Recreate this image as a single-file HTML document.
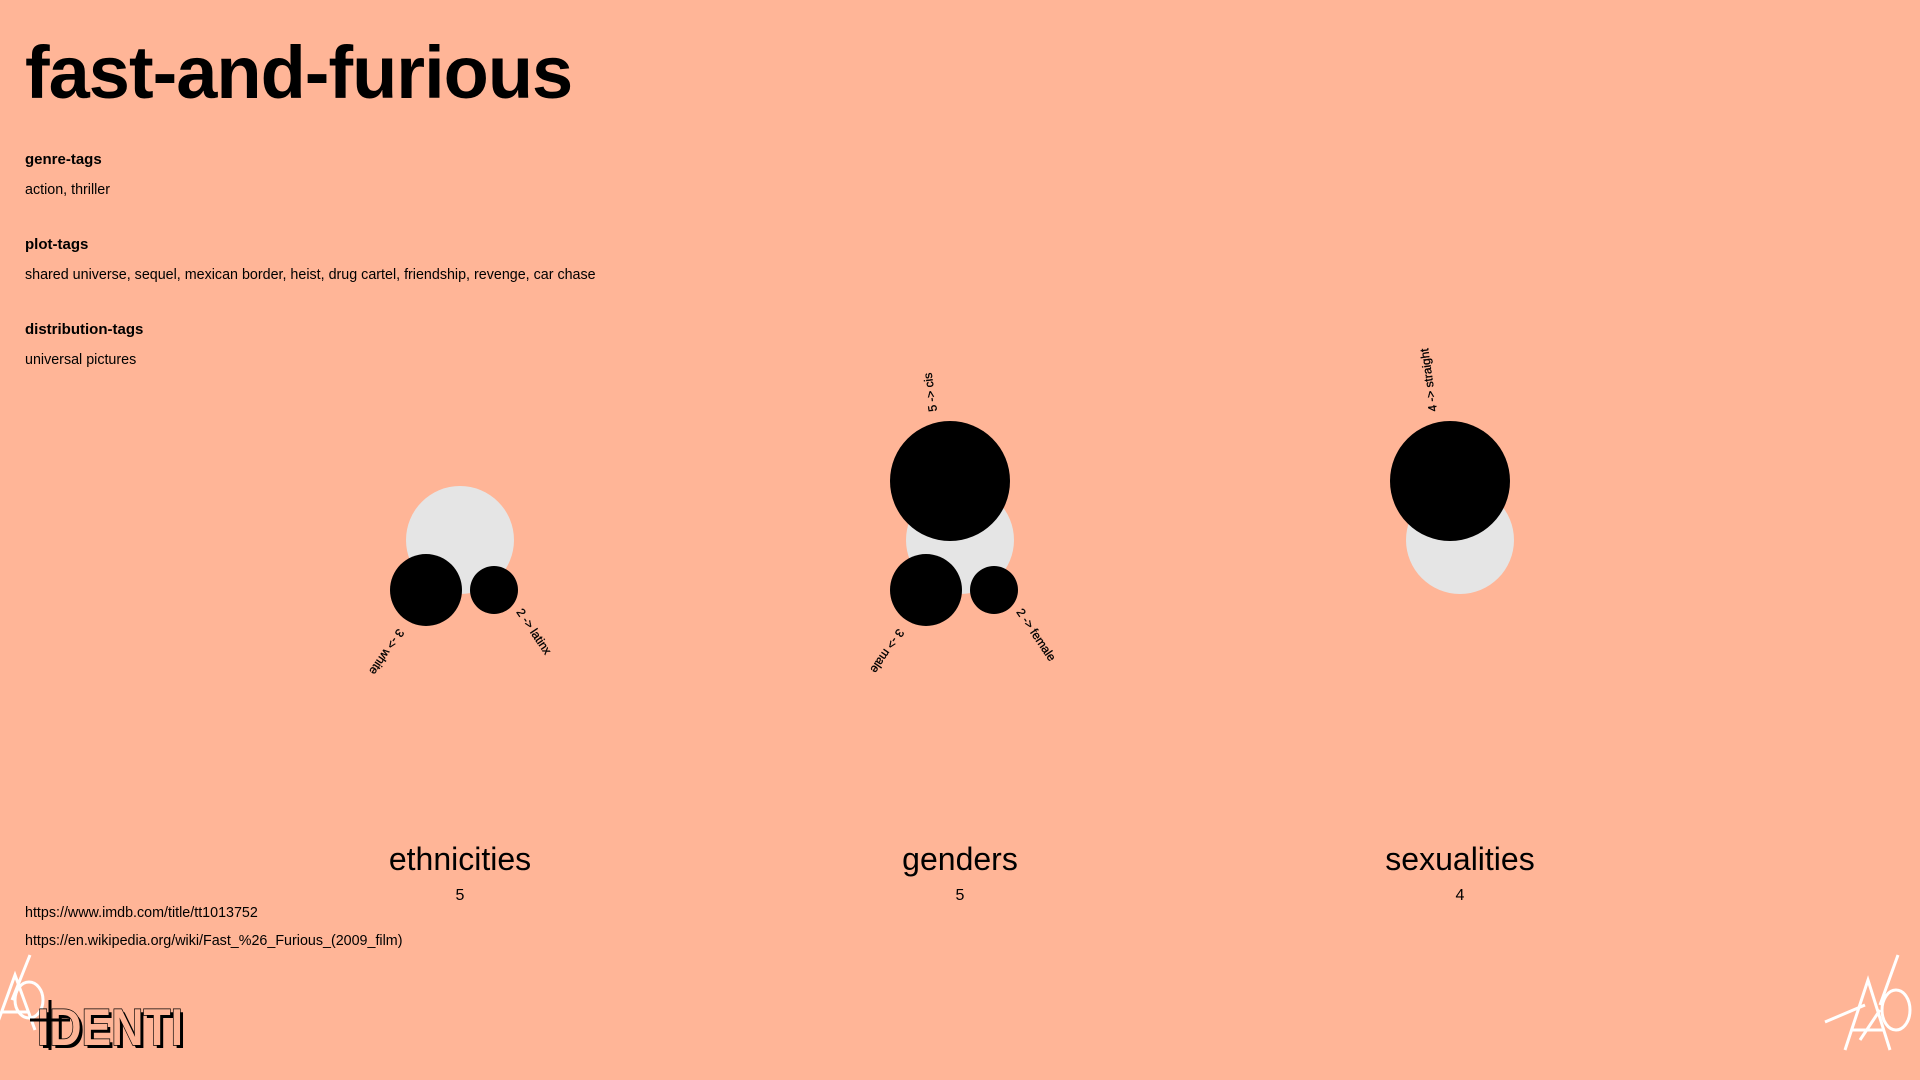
<!DOCTYPE html>
<html><head><meta charset="utf-8"><style>
html,body{margin:0;padding:0;}
body{width:1920px;height:1080px;background:#FFB597;position:relative;overflow:hidden;font-family:"Liberation Sans",sans-serif;color:#000;}
.t{position:absolute;left:25px;top:36px;font-size:74px;font-weight:bold;letter-spacing:-1px;line-height:1;}
.h{position:absolute;left:25px;font-size:15px;font-weight:bold;}
.b{position:absolute;left:25px;font-size:14.3px;}
svg{position:absolute;left:0;top:0;}
</style></head><body>
<div class="t">fast-and-furious</div>
<div class="h" style="top:151px">genre-tags</div>
<div class="b" style="top:182px">action, thriller</div>
<div class="h" style="top:236px">plot-tags</div>
<div class="b" style="top:267px">shared universe, sequel, mexican border, heist, drug cartel, friendship, revenge, car chase</div>
<div class="h" style="top:321px">distribution-tags</div>
<div class="b" style="top:352px">universal pictures</div>
<div class="b" style="top:905px">https://www.imdb.com/title/tt1013752</div>
<div class="b" style="top:933px">https://en.wikipedia.org/wiki/Fast_%26_Furious_(2009_film)</div>
<svg width="1920" height="1080" viewBox="0 0 1920 1080">
<g fill="#e5e5e5">
<circle cx="460" cy="540" r="54"/><circle cx="960" cy="540" r="54"/><circle cx="1460" cy="540" r="54"/>
</g>
<g fill="#000">
<circle cx="426" cy="590" r="36"/><circle cx="494" cy="590" r="24"/>
<circle cx="950" cy="481" r="60"/><circle cx="926" cy="590" r="36"/><circle cx="994" cy="590" r="24"/>
<circle cx="1450" cy="481" r="60"/>
</g>
<g font-family="Liberation Sans, sans-serif" font-size="12" fill="#000" stroke="#000" stroke-width="0.3">
<text transform="translate(398,628) rotate(124)">3 -&gt; white</text>
<text transform="translate(516,612) rotate(56)">2 -&gt; latinx</text>
<text transform="translate(898,628) rotate(124)">3 -&gt; male</text>
<text transform="translate(1016,612) rotate(56)">2 -&gt; female</text>
<text transform="translate(937,411) rotate(-98)">5 -&gt; cis</text>
<text transform="translate(1437,411) rotate(-98)">4 -&gt; straight</text>
</g>
<g font-family="Liberation Sans, sans-serif" text-anchor="middle" fill="#000">
<text x="460" y="870" font-size="32">ethnicities</text>
<text x="960" y="870" font-size="32">genders</text>
<text x="1460" y="870" font-size="32">sexualities</text>
<text x="460" y="900" font-size="16">5</text>
<text x="960" y="900" font-size="16">5</text>
<text x="1460" y="900" font-size="16">4</text>
</g>
<g fill="none" stroke="#fff" stroke-width="3">
<path d="M-5 1030 L15 975 L35 1030 M2 1012 L28 1012"/>
<path d="M30 955 L12 1000 M15 1000 a14 18 0 1 0 28 0 a14 18 0 1 0 -28 0"/>
<path d="M1845 1050 L1868 980 L1890 1050 M1852 1030 L1884 1030 M1825 1022 L1865 1005 M1860 1040 L1880 1010"/>
<path d="M1898 955 L1880 1005 M1882 1010 a14 20 0 1 0 28 0 a14 20 0 1 0 -28 0"/>
</g>
<g font-family="Liberation Sans, sans-serif" font-size="52" font-weight="bold">
<text x="40" y="1048" fill="#000" textLength="146" lengthAdjust="spacingAndGlyphs">IDENTI</text>
<text x="37" y="1045" fill="none" stroke="#000" stroke-width="1.5" textLength="146" lengthAdjust="spacingAndGlyphs">IDENTI</text>
<text x="37" y="1045" fill="#FFB597" stroke="#000" stroke-width="0.8" textLength="146" lengthAdjust="spacingAndGlyphs" style="paint-order:stroke">IDENTI</text>
</g>
<path d="M30 1020 L70 1020 M50 1000 L50 1050" stroke="#000" stroke-width="3"/>
</svg>
</body></html>
